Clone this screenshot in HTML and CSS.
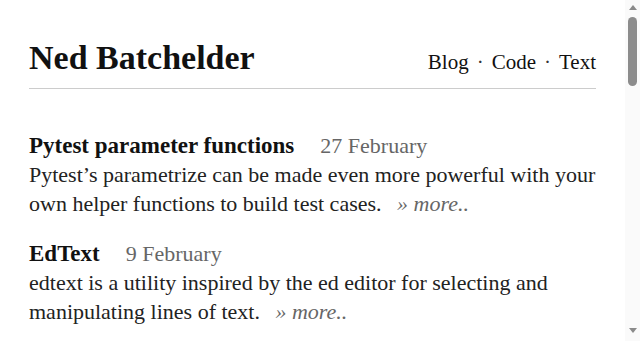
FILE: index.html
```html
<!DOCTYPE html>
<html lang="en">
<head>
  <meta charset="UTF-8" />
  <title>Ned Batchelder</title>
  <link rel="stylesheet" href="styles.css">
</head>
<body>

  <div class="window">
    <div class="page">
      <header class="masthead">
        <h1 class="site-name">Ned Batchelder</h1>
        <nav class="nav">
          <a href="#">Blog</a><span class="dot">·</span><a href="#">Code</a><span class="dot">·</span><a href="#">Text</a>
        </nav>
      </header>

      <div class="posts">
        <div class="post">
          <div class="post-head">
            <a class="post-title" href="#">Pytest parameter functions</a>
            <span class="post-date">27 February</span>
          </div>
          <p class="post-text">Pytest’s parametrize can be made even more powerful with your own helper functions to build test cases. <a class="more" href="#">» more..</a></p>
        </div>

        <div class="post">
          <div class="post-head">
            <a class="post-title" href="#">EdText</a>
            <span class="post-date">9 February</span>
          </div>
          <p class="post-text">edtext is a utility inspired by the ed editor for selecting and manipulating lines of text. <a class="more" href="#">» more..</a></p>
        </div>
      </div>
    </div>

    <!-- browser scrollbar, drawn by hand since the headless one is hidden -->
    <div class="scrollbar">
      <div class="arrow-up"></div>
      <div class="track">
        <div class="thumb"></div>
      </div>
      <div class="arrow-down"></div>
    </div>
  </div>

</body>
</html>
```

FILE: styles.css
```css
html, body {
  margin: 0;
  padding: 0;
  height: 100%;
  overflow: hidden;
  background-color: white;
  color: #111;
  font-family: "Liberation Serif", "DejaVu Serif", serif;
}

a {
  color: inherit;
  text-decoration: none;
}

.window {
  display: flex;
  height: 100%;
}

.page {
  flex: 1;
  min-width: 0;
  padding: 0 29px;
  overflow: hidden;
}

.masthead {
  display: flex;
  justify-content: space-between;
  align-items: baseline;
  padding-top: 38px;
  padding-bottom: 10px;
  border-bottom: 1px solid #ccc;
}

.site-name {
  margin: 0;
  font-size: 34px;
  font-weight: bold;
  line-height: 40px;
}

.nav {
  font-size: 21px;
}

.nav .dot {
  margin: 0 8px;
  color: #333;
}

.posts {
  padding-top: 42px;
}

.post {
  margin-bottom: 21px;
}

.post-head {
  display: flex;
  align-items: baseline;
  gap: 26px;
  font-size: 22px;
  line-height: 29px;
}

.post-title {
  font-size: 23px;
  font-weight: bold;
}

.post-date {
  color: #666;
}

.post-text {
  margin: 0;
  font-size: 22px;
  line-height: 29px;
  color: #222;
}

.more {
  margin-left: 10px;
  font-style: italic;
  color: #666;
}

/* scrollbar */
.scrollbar {
  width: 15px;
  flex-shrink: 0;
  display: flex;
  flex-direction: column;
  align-items: center;
  background: #fafafa;
}

.arrow-up, .arrow-down {
  width: 0;
  height: 0;
  border-left: 4px solid transparent;
  border-right: 4px solid transparent;
}

.arrow-up {
  margin: 5px 0 6px;
  border-bottom: 5px solid #8a8a8a;
}

.arrow-down {
  margin: 6px 0 8px;
  border-top: 5px solid #8a8a8a;
}

.track {
  flex: 1;
  align-self: stretch;
  padding: 1px 3px 0;
}

.thumb {
  height: 69px;
  background: #8c8c8c;
  border-radius: 5px;
}
```
